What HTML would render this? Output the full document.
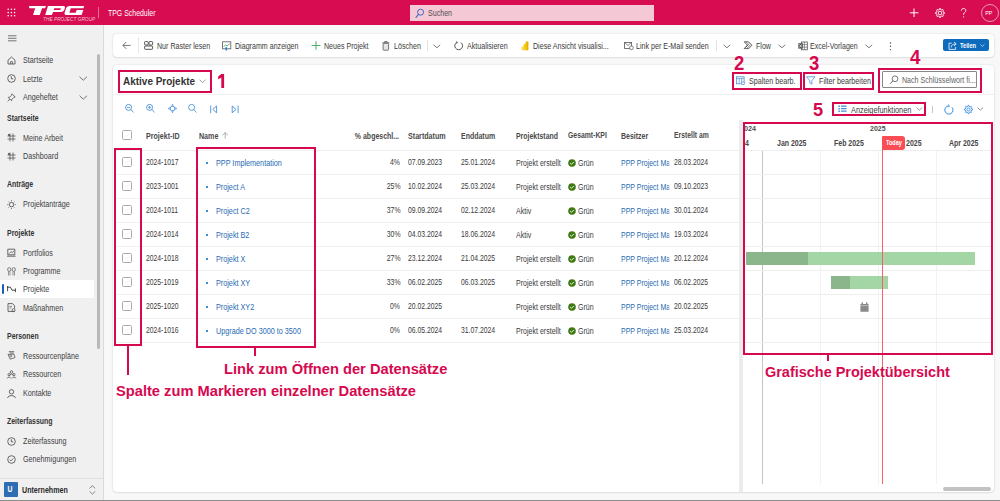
<!DOCTYPE html>
<html><head><meta charset="utf-8">
<style>
*{margin:0;padding:0;box-sizing:border-box}
html,body{width:1000px;height:501px;overflow:hidden;background:#f8f8f8;font-family:"Liberation Sans",sans-serif;color:#323130}
.a{position:absolute;white-space:nowrap}
svg.a{overflow:visible}
</style></head><body>
<div class="a" style="left:0px;top:25px;width:103px;height:475px;background:#f0f0f0;"></div>
<div class="a" style="left:103px;top:25px;width:1px;height:475px;background:#dadada;"></div>
<div class="a" style="left:0px;top:500px;width:1000px;height:1px;background:#8c8c8c;"></div>
<div class="a" style="left:113px;top:34px;width:881px;height:23px;background:#fff;border-radius:4px;box-shadow:0 0 1.5px rgba(0,0,0,.18),0 1px 2px rgba(0,0,0,.08)"></div>
<div class="a" style="left:113px;top:65px;width:881px;height:427px;background:#fff;border-radius:4px;box-shadow:0 0 1.5px rgba(0,0,0,.18),0 1px 2px rgba(0,0,0,.08)"></div>
<div class="a" style="left:0px;top:0px;width:1000px;height:25px;background:#d70c51;"></div>
<svg class="a" style="left:0px;top:0px" width="20" height="20" viewBox="0 0 20 20"><circle cx="8.2" cy="9.3" r=".8" fill="#fff"/><circle cx="8.2" cy="12.6" r=".8" fill="#fff"/><circle cx="8.2" cy="15.8" r=".8" fill="#fff"/><circle cx="11.4" cy="9.3" r=".8" fill="#fff"/><circle cx="11.4" cy="12.6" r=".8" fill="#fff"/><circle cx="11.4" cy="15.8" r=".8" fill="#fff"/><circle cx="14.6" cy="9.3" r=".8" fill="#fff"/><circle cx="14.6" cy="12.6" r=".8" fill="#fff"/><circle cx="14.6" cy="15.8" r=".8" fill="#fff"/></svg>
<svg class="a" style="left:0px;top:0px" width="100" height="25" viewBox="0 0 100 25"><g transform="matrix(1 0 -0.33 1 4.95 0)" fill="#fff"><path d="M25.9 5.9H42.9V8.3H39.8V15H33V8.3H27.3Z"/><path fill-rule="evenodd" d="M44.9 5.9H60.3Q62.6 5.9 62.6 8.1V9.8Q62.6 11.9 60.4 11.9H52V15H45.2ZM52 8.3H58.6V9.9H52Z"/><path d="M66.6 5.9H81.2V8.3H68.6V12.8H75V9.9H81.6V15H66.6Q63.8 15 63.8 12.2V8.7Q63.8 5.9 66.6 5.9Z"/></g></svg>
<div class="a" style="left:43px;top:16.5px;font-size:4.8px;line-height:6px;font-style:italic;color:#f3bfd0">THE PROJECT GROUP</div>
<div class="a" style="left:98px;top:7px;width:1px;height:10.5px;background:#e2729a;"></div>
<div class="a" style="left:107.5px;top:8.30px;font-size:8.34px;line-height:10px;color:#fff;transform:scaleX(0.8333);transform-origin:left center;">TPG Scheduler</div>
<div class="a" style="left:410px;top:5px;width:244px;height:15.5px;background:#f5c8d6;"></div>
<svg class="a" style="left:414px;top:6.6px" width="12" height="12" viewBox="0 0 12 12"><circle cx="6.6" cy="5.2" r="3" fill="none" stroke="#3d6cc0" stroke-width="1"/><path d="M4.5 7.3L2 10.3" stroke="#3d6cc0" stroke-width="1.1" stroke-linecap="round"/></svg>
<div class="a" style="left:428px;top:8.10px;font-size:8.52px;line-height:10px;color:#505050;transform:scaleX(0.8333);transform-origin:left center;">Suchen</div>
<svg class="a" style="left:909px;top:8px" width="10" height="10" viewBox="0 0 10 10"><path d="M5 .5V9M.8 4.8H9.4" stroke="#fff" stroke-width="1"/></svg>
<svg class="a" style="left:934.5px;top:7.8px" width="10" height="10" viewBox="0 0 10 10"><path d="M8.45 4.38L9.47 4.49L9.47 5.51L8.45 5.62L7.87 7.00L8.52 7.80L7.80 8.52L7.00 7.87L5.62 8.45L5.51 9.47L4.49 9.47L4.38 8.45L3.00 7.87L2.20 8.52L1.48 7.80L2.13 7.00L1.55 5.62L0.53 5.51L0.53 4.49L1.55 4.38L2.13 3.00L1.48 2.20L2.20 1.48L3.00 2.13L4.38 1.55L4.49 0.53L5.51 0.53L5.62 1.55L7.00 2.13L7.80 1.48L8.52 2.20L7.87 3.00Z" fill="none" stroke="#fff" stroke-width=".9" stroke-linejoin="round"/><circle cx="5" cy="5" r="1.8" fill="none" stroke="#fff" stroke-width=".9"/></svg>
<svg class="a" style="left:960px;top:8px" width="8" height="10" viewBox="0 0 8 10"><path d="M1.3 2.6C1.3 1.3 2.4.5 3.6.5S5.9 1.3 5.9 2.6C5.9 4.2 3.6 4.4 3.6 6.3V7" fill="none" stroke="#fff" stroke-width=".9"/><circle cx="3.6" cy="8.8" r=".6" fill="#fff"/></svg>
<div class="a" style="left:980.5px;top:4px;width:18px;height:18px;border:1px solid #e89ab3;border-radius:50%"></div>
<div class="a" style="left:984.2px;top:8.10px;font-size:6.21px;line-height:10px;color:#fff;transform:scaleX(0.8696);transform-origin:left center;width:11px;text-align:center;">PP</div>
<svg class="a" style="left:8px;top:35px" width="9" height="7" viewBox="0 0 9 7"><path d="M0 .8H8.5M0 3.3H8.5M0 5.8H8.5" stroke="#555" stroke-width=".8"/></svg>
<div class="a" style="left:0px;top:280px;width:94px;height:18px;background:#ffffff;"></div>
<div class="a" style="left:1.5px;top:284px;width:2px;height:10px;background:#1a5fb4;border-radius:1px;"></div>
<div class="a" style="left:22.6px;top:55.10px;font-size:8.64px;line-height:10px;color:#3f3f3f;transform:scaleX(0.8333);transform-origin:left center;">Startseite</div>
<svg class="a" style="left:6.5px;top:55.7px" width="9" height="9" viewBox="0 0 9 9"><path d="M1 4.2L4.5 1 8 4.2V8H1Z" fill="none" stroke="#444" stroke-width=".8" stroke-linejoin="round"/><path d="M3.6 8V5.6H5.4V8" fill="none" stroke="#444" stroke-width=".7"/></svg>
<div class="a" style="left:22.6px;top:73.60px;font-size:8.64px;line-height:10px;color:#3f3f3f;transform:scaleX(0.8333);transform-origin:left center;">Letzte</div>
<svg class="a" style="left:6.5px;top:74.2px" width="9" height="9" viewBox="0 0 9 9"><circle cx="4.5" cy="4.5" r="3.8" fill="none" stroke="#444" stroke-width=".8"/><path d="M4.3 2.3V4.8H6.2" fill="none" stroke="#444" stroke-width=".8"/></svg>
<div class="a" style="left:22.6px;top:91.90px;font-size:8.64px;line-height:10px;color:#3f3f3f;transform:scaleX(0.8333);transform-origin:left center;">Angeheftet</div>
<svg class="a" style="left:6.5px;top:92.5px" width="9" height="9" viewBox="0 0 9 9"><path d="M5 .8L8.2 4 6.6 4.6 4.9 6.3 4.6 7.8 1.2 4.4 2.7 4.1 4.4 2.4Z M2.9 6.1L.6 8.4" fill="none" stroke="#444" stroke-width=".75" stroke-linejoin="round"/></svg>
<div class="a" style="left:22.6px;top:132.70px;font-size:8.64px;line-height:10px;color:#3f3f3f;transform:scaleX(0.8333);transform-origin:left center;">Meine Arbeit</div>
<svg class="a" style="left:6.5px;top:133.3px" width="9" height="9" viewBox="0 0 9 9"><path d="M3 .5V8.5M6 .5V8.5M.5 3H8.5M.5 6H8.5" stroke="#555" stroke-width=".8"/><path d="M1 1H3V3H1Z" fill="#666"/></svg>
<div class="a" style="left:22.6px;top:151.10px;font-size:8.64px;line-height:10px;color:#3f3f3f;transform:scaleX(0.8333);transform-origin:left center;">Dashboard</div>
<svg class="a" style="left:6.5px;top:151.7px" width="9" height="9" viewBox="0 0 9 9"><path d="M3 .5V8.5M6 .5V8.5M.5 3H8.5M.5 6H8.5" stroke="#555" stroke-width=".8"/><path d="M1 1H3V3H1Z" fill="#666"/></svg>
<div class="a" style="left:22.6px;top:199.10px;font-size:8.64px;line-height:10px;color:#3f3f3f;transform:scaleX(0.8333);transform-origin:left center;">Projektanträge</div>
<svg class="a" style="left:6.5px;top:199.7px" width="9" height="9" viewBox="0 0 9 9"><circle cx="4.5" cy="4.6" r="2.2" fill="none" stroke="#444" stroke-width=".8"/><path d="M4.5 .2V1.3M4.5 7.9V9M.2 4.6H1.3M7.7 4.6H8.8M1.5 1.6L2.3 2.4M7.5 1.6L6.7 2.4M1.5 7.6L2.3 6.8M7.5 7.6L6.7 6.8" stroke="#444" stroke-width=".7"/></svg>
<div class="a" style="left:22.6px;top:247.70px;font-size:8.64px;line-height:10px;color:#3f3f3f;transform:scaleX(0.8333);transform-origin:left center;">Portfolios</div>
<svg class="a" style="left:6.5px;top:248.3px" width="9" height="9" viewBox="0 0 9 9"><path d="M.8 1.2H7.8V6.8H.8Z" fill="none" stroke="#444" stroke-width=".8"/><path d="M2.2 5.6L4 3.6 5.3 4.8 7 2.8" fill="none" stroke="#444" stroke-width=".7"/><path d="M0 8.2H8.6" stroke="#444" stroke-width=".8"/></svg>
<div class="a" style="left:22.6px;top:265.90px;font-size:8.64px;line-height:10px;color:#3f3f3f;transform:scaleX(0.8333);transform-origin:left center;">Programme</div>
<svg class="a" style="left:6.5px;top:266.5px" width="9" height="9" viewBox="0 0 9 9"><rect x=".7" y=".7" width="3.1" height="3.6" rx="1.3" fill="none" stroke="#555" stroke-width=".7"/><rect x="5.2" y=".7" width="3.1" height="3.6" rx="1.3" fill="none" stroke="#555" stroke-width=".7"/><path d="M1.5 4.5V8.5M3 4.5V8.5M6 4.5V8.5M7.5 4.5V8.5" stroke="#555" stroke-width=".6"/></svg>
<div class="a" style="left:22.6px;top:284.20px;font-size:8.64px;line-height:10px;color:#3f3f3f;transform:scaleX(0.8333);transform-origin:left center;">Projekte</div>
<svg class="a" style="left:6.5px;top:284.8px" width="9" height="9" viewBox="0 0 9 9"><path d="M.6 1V6.2M.6 2.2H3.4L5 5.2H8.4M8.4 3.4V7.2" fill="none" stroke="#333" stroke-width=".9"/></svg>
<div class="a" style="left:22.6px;top:302.70px;font-size:8.64px;line-height:10px;color:#3f3f3f;transform:scaleX(0.8333);transform-origin:left center;">Maßnahmen</div>
<svg class="a" style="left:6.5px;top:303.3px" width="9" height="9" viewBox="0 0 9 9"><path d="M1 .6H5.5L7.6 2.8V5.6M7.6 8.4H1V.6" fill="none" stroke="#444" stroke-width=".8"/><circle cx="6.6" cy="7.2" r="1.5" fill="none" stroke="#444" stroke-width=".7"/><path d="M2.4 3.4H5M2.4 5H4.4" stroke="#444" stroke-width=".6"/></svg>
<div class="a" style="left:22.6px;top:350.80px;font-size:8.64px;line-height:10px;color:#3f3f3f;transform:scaleX(0.8333);transform-origin:left center;">Ressourcenpläne</div>
<svg class="a" style="left:6.5px;top:351.4px" width="9" height="9" viewBox="0 0 9 9"><path d="M1.8 .6H7.2M2.5 2H6.8M1 3.4L3.2 8.2 8 6.6 7 3.2Z" fill="none" stroke="#444" stroke-width=".7"/><circle cx="3.8" cy="5" r="1" fill="none" stroke="#444" stroke-width=".6"/></svg>
<div class="a" style="left:22.6px;top:369.20px;font-size:8.64px;line-height:10px;color:#3f3f3f;transform:scaleX(0.8333);transform-origin:left center;">Ressourcen</div>
<svg class="a" style="left:6.5px;top:369.8px" width="9" height="9" viewBox="0 0 9 9"><circle cx="4.5" cy="2" r="1.3" fill="none" stroke="#444" stroke-width=".7"/><circle cx="2" cy="4.6" r="1.1" fill="none" stroke="#444" stroke-width=".7"/><circle cx="7" cy="4.6" r="1.1" fill="none" stroke="#444" stroke-width=".7"/><path d="M.2 8.4C.4 6.6 3.6 6.6 3.8 8.4M5.2 8.4C5.4 6.6 8.6 6.6 8.8 8.4M2.8 5.6C3.2 3.6 5.8 3.6 6.2 5.6" fill="none" stroke="#444" stroke-width=".7"/></svg>
<div class="a" style="left:22.6px;top:387.90px;font-size:8.64px;line-height:10px;color:#3f3f3f;transform:scaleX(0.8333);transform-origin:left center;">Kontakte</div>
<svg class="a" style="left:6.5px;top:388.5px" width="9" height="9" viewBox="0 0 9 9"><circle cx="4.5" cy="2.8" r="2.2" fill="none" stroke="#444" stroke-width=".8"/><path d="M.6 9C.8 5.8 8.2 5.8 8.4 9" fill="none" stroke="#444" stroke-width=".8"/></svg>
<div class="a" style="left:22.6px;top:435.90px;font-size:8.64px;line-height:10px;color:#3f3f3f;transform:scaleX(0.8333);transform-origin:left center;">Zeiterfassung</div>
<svg class="a" style="left:6.5px;top:436.5px" width="9" height="9" viewBox="0 0 9 9"><circle cx="4.5" cy="4.5" r="3.8" fill="none" stroke="#444" stroke-width=".8"/><path d="M4.3 2.3V4.8H6.2" fill="none" stroke="#444" stroke-width=".8"/></svg>
<div class="a" style="left:22.6px;top:453.90px;font-size:8.64px;line-height:10px;color:#3f3f3f;transform:scaleX(0.8333);transform-origin:left center;">Genehmigungen</div>
<svg class="a" style="left:6.5px;top:454.5px" width="9" height="9" viewBox="0 0 9 9"><circle cx="4.5" cy="4.5" r="3.8" fill="none" stroke="#444" stroke-width=".8"/><path d="M2.7 4.6L4 5.9 6.4 3.4" fill="none" stroke="#444" stroke-width=".8"/></svg>
<div class="a" style="left:6.6px;top:112.80px;font-size:8.34px;line-height:10px;color:#333333;font-weight:bold;transform:scaleX(0.8333);transform-origin:left center;">Startseite</div>
<div class="a" style="left:6.6px;top:179.30px;font-size:8.34px;line-height:10px;color:#333333;font-weight:bold;transform:scaleX(0.8333);transform-origin:left center;">Anträge</div>
<div class="a" style="left:6.6px;top:227.50px;font-size:8.34px;line-height:10px;color:#333333;font-weight:bold;transform:scaleX(0.8333);transform-origin:left center;">Projekte</div>
<div class="a" style="left:6.6px;top:331.10px;font-size:8.34px;line-height:10px;color:#333333;font-weight:bold;transform:scaleX(0.8333);transform-origin:left center;">Personen</div>
<div class="a" style="left:6.6px;top:416.10px;font-size:8.34px;line-height:10px;color:#333333;font-weight:bold;transform:scaleX(0.8333);transform-origin:left center;">Zeiterfassung</div>
<svg class="a" style="left:79px;top:76.2px" width="9" height="5" viewBox="0 0 9 5"><path d="M.5 .7L4.3 4.2 8 .7" fill="none" stroke="#555" stroke-width=".8"/></svg>
<svg class="a" style="left:79px;top:94.5px" width="9" height="5" viewBox="0 0 9 5"><path d="M.5 .7L4.3 4.2 8 .7" fill="none" stroke="#555" stroke-width=".8"/></svg>
<div class="a" style="left:97px;top:53.5px;width:3px;height:295px;background:#b8b8b8;border-radius:1.5px;"></div>
<div class="a" style="left:0px;top:478px;width:103px;height:1px;background:#e0e0e0;"></div>
<div class="a" style="left:3.5px;top:482.3px;width:14.5px;height:14.4px;background:#2f6db3;border-radius:1px;"></div>
<div class="a" style="left:3.5px;top:484.80px;font-size:8.16px;line-height:10px;color:#fff;font-weight:bold;transform:scaleX(0.8333);transform-origin:left center;width:14.5px;text-align:center;">U</div>
<div class="a" style="left:21.7px;top:484.90px;font-size:8.54px;line-height:10px;color:#2b2b2b;font-weight:bold;transform:scaleX(0.8333);transform-origin:left center;">Unternehmen</div>
<svg class="a" style="left:88.5px;top:485px" width="7" height="10" viewBox="0 0 7 10"><path d="M.6 3.4L3.4 .7 6.2 3.4M.6 6.4L3.4 9.1 6.2 6.4" fill="none" stroke="#666" stroke-width=".8"/></svg>
<svg class="a" style="left:122px;top:41px" width="10" height="9" viewBox="0 0 10 9"><path d="M4.2 1L.9 4.4 4.2 7.8M1 4.4H8.6" fill="none" stroke="#555" stroke-width=".8"/></svg>
<div class="a" style="left:137.5px;top:37px;width:1px;height:16px;background:#e6e6e6;"></div>
<svg class="a" style="left:144px;top:40.5px" width="10" height="9" viewBox="0 0 10 9"><rect x=".6" y=".6" width="3.6" height="3.4" rx=".7" fill="none" stroke="#444" stroke-width=".9"/><rect x="5" y=".6" width="3.6" height="3.4" rx=".7" fill="none" stroke="#444" stroke-width=".9"/><rect x=".6" y="5" width="8" height="3.3" rx=".7" fill="none" stroke="#444" stroke-width=".9"/></svg>
<div class="a" style="left:157px;top:41.10px;font-size:8.52px;line-height:10px;color:#3a3a3a;transform:scaleX(0.8333);transform-origin:left center;">Nur Raster lesen</div>
<svg class="a" style="left:221.5px;top:40.5px" width="10" height="10" viewBox="0 0 10 10"><rect x=".6" y=".8" width="8.2" height="7" fill="none" stroke="#555" stroke-width=".8"/><path d="M1.8 5.8L3.6 3.8 5.2 5 7.6 2.6" fill="none" stroke="#3aa55a" stroke-width=".8"/><path d="M4.3 6.2V9.5" stroke="#2b7cd3" stroke-width="1.6"/></svg>
<div class="a" style="left:234.7px;top:41.10px;font-size:8.52px;line-height:10px;color:#3a3a3a;transform:scaleX(0.8333);transform-origin:left center;">Diagramm anzeigen</div>
<svg class="a" style="left:311px;top:41px" width="10" height="9" viewBox="0 0 10 9"><path d="M5 .2V8.8M.6 4.5H9.4" stroke="#3aa55a" stroke-width=".9"/></svg>
<div class="a" style="left:324.4px;top:41.10px;font-size:8.52px;line-height:10px;color:#3a3a3a;transform:scaleX(0.8333);transform-origin:left center;">Neues Projekt</div>
<svg class="a" style="left:381.5px;top:40.5px" width="8" height="10" viewBox="0 0 8 10"><path d="M.3 1.8H7.4M2.6 1.8V.6H5.1V1.8" fill="none" stroke="#555" stroke-width=".8"/><rect x="1.1" y="2.3" width="5.5" height="6.9" rx=".8" fill="#e6e6e6" stroke="#555" stroke-width=".8"/></svg>
<div class="a" style="left:393.7px;top:41.10px;font-size:8.52px;line-height:10px;color:#3a3a3a;transform:scaleX(0.8333);transform-origin:left center;">Löschen</div>
<div class="a" style="left:426.5px;top:40px;width:1px;height:11px;background:#e3e3e3;"></div>
<svg class="a" style="left:432.5px;top:43.5px" width="8" height="5" viewBox="0 0 8 5"><path d="M.6 .8L3.9 3.8 7.2 .8" fill="none" stroke="#555" stroke-width=".8"/></svg>
<svg class="a" style="left:453.5px;top:40.5px" width="10" height="10" viewBox="0 0 10 10"><path d="M6.9 1.6A3.9 3.9 0 1 1 3 1.3" fill="none" stroke="#444" stroke-width=".9"/><path d="M2.5 0.3L3.6 1.4 2.5 2.6" fill="none" stroke="#444" stroke-width=".8"/></svg>
<div class="a" style="left:466.9px;top:41.10px;font-size:8.52px;line-height:10px;color:#3a3a3a;transform:scaleX(0.8333);transform-origin:left center;">Aktualisieren</div>
<svg class="a" style="left:521px;top:40.5px" width="8" height="10" viewBox="0 0 8 10"><rect x="4.6" y=".6" width="2.8" height="8.6" rx=".6" fill="#e8b200"/><rect x="2.6" y="3" width="2.8" height="6.2" rx=".6" fill="#f2c811"/><rect x=".6" y="5.6" width="2.8" height="3.6" rx=".6" fill="#f9d94a"/></svg>
<div class="a" style="left:533px;top:41.10px;font-size:8.52px;line-height:10px;color:#3a3a3a;transform:scaleX(0.8333);transform-origin:left center;">Diese Ansicht visualisi...</div>
<svg class="a" style="left:623.5px;top:40.5px" width="10" height="10" viewBox="0 0 10 10"><rect x=".6" y="1.5" width="6.8" height="6" fill="none" stroke="#555" stroke-width=".8"/><path d="M.6 1.5L4 4.6 7.4 1.5" fill="none" stroke="#555" stroke-width=".7"/><circle cx="7.4" cy="6.8" r="1.9" fill="#fff" stroke="#555" stroke-width=".7"/></svg>
<div class="a" style="left:636px;top:41.10px;font-size:8.52px;line-height:10px;color:#3a3a3a;transform:scaleX(0.8333);transform-origin:left center;">Link per E-Mail senden</div>
<div class="a" style="left:716px;top:40px;width:1px;height:11px;background:#e3e3e3;"></div>
<svg class="a" style="left:722.5px;top:43.5px" width="8" height="5" viewBox="0 0 8 5"><path d="M.6 .8L3.9 3.8 7.2 .8" fill="none" stroke="#555" stroke-width=".8"/></svg>
<svg class="a" style="left:743px;top:41px" width="10" height="9" viewBox="0 0 10 9"><path d="M1.2 .8H5.6L8.9 4.2 5.8 7.6H1.2L4.4 4.2Z" fill="none" stroke="#3c3c3c" stroke-width=".8" stroke-linejoin="round"/><path d="M2.6 6.4L6.2 2.6M4.2 7.2L7.4 3.8M3.4 1.2L5 2.8" fill="none" stroke="#3c3c3c" stroke-width=".7"/></svg>
<div class="a" style="left:756px;top:41.10px;font-size:8.52px;line-height:10px;color:#3a3a3a;transform:scaleX(0.8333);transform-origin:left center;">Flow</div>
<svg class="a" style="left:777.5px;top:43.5px" width="8" height="5" viewBox="0 0 8 5"><path d="M.6 .8L3.9 3.8 7.2 .8" fill="none" stroke="#555" stroke-width=".8"/></svg>
<svg class="a" style="left:797.5px;top:40.5px" width="10" height="10" viewBox="0 0 10 10"><rect x="3.5" y="1" width="5.8" height="7.8" fill="none" stroke="#555" stroke-width=".8"/><path d="M3.5 3.6H9.3M3.5 6.2H9.3M6.4 1V8.8" stroke="#555" stroke-width=".6"/><rect x=".3" y="2.2" width="4.6" height="5.4" fill="#555"/><path d="M1.4 3.4L3.8 6.4M3.8 3.4L1.4 6.4" stroke="#fff" stroke-width=".7"/></svg>
<div class="a" style="left:810.3px;top:41.10px;font-size:8.52px;line-height:10px;color:#3a3a3a;transform:scaleX(0.8333);transform-origin:left center;">Excel-Vorlagen</div>
<svg class="a" style="left:865px;top:43.5px" width="8" height="5" viewBox="0 0 8 5"><path d="M.6 .8L3.9 3.8 7.2 .8" fill="none" stroke="#555" stroke-width=".8"/></svg>
<svg class="a" style="left:889px;top:41.5px" width="3" height="9" viewBox="0 0 3 9"><circle cx="1.5" cy="1" r=".7" fill="#444"/><circle cx="1.5" cy="4.3" r=".7" fill="#444"/><circle cx="1.5" cy="7.6" r=".7" fill="#444"/></svg>
<div class="a" style="left:942.6px;top:39px;width:46px;height:12.4px;background:#0f6cbd;border-radius:2px;"></div>
<svg class="a" style="left:948px;top:41px" width="10" height="9" viewBox="0 0 10 9"><path d="M3.8 2.2H1V8.4H7.6V6" fill="none" stroke="#fff" stroke-width=".8"/><path d="M3.2 6.4C3.4 4 5 3 7.6 3M6 1L8.2 3 6 5" fill="none" stroke="#fff" stroke-width=".8"/></svg>
<div class="a" style="left:960px;top:40.70px;font-size:7.52px;line-height:10px;color:#fff;font-weight:bold;transform:scaleX(0.7576);transform-origin:left center;">Teilen</div>
<svg class="a" style="left:979.8px;top:44.4px" width="5" height="3" viewBox="0 0 5 3"><path d="M.4 .5L2.4 2.4 4.4 .5" fill="none" stroke="#fff" stroke-width=".6"/></svg>
<div class="a" style="left:123px;top:73.60px;font-size:11.47px;line-height:14px;color:#333333;font-weight:bold;transform:scaleX(0.8696);transform-origin:left center;">Aktive Projekte</div>
<svg class="a" style="left:199px;top:79px" width="8" height="5" viewBox="0 0 8 5"><path d="M.6 .8L3.6 3.6 6.6 .8" fill="none" stroke="#777" stroke-width=".7"/></svg>
<div class="a" style="left:113px;top:94px;width:881px;height:1px;background:#efefef;"></div>
<svg class="a" style="left:125.2px;top:104.2px" width="9" height="9" viewBox="0 0 9 9"><circle cx="3.6" cy="3.4" r="3" fill="none" stroke="#4b8fd6" stroke-width=".9"/><path d="M5.7 5.5L8.6 8.4" stroke="#4b8fd6" stroke-width=".9"/><path d="M2 3.4H5.2" stroke="#4b8fd6" stroke-width=".8"/></svg>
<svg class="a" style="left:146px;top:104.2px" width="9" height="9" viewBox="0 0 9 9"><circle cx="3.6" cy="3.4" r="3" fill="none" stroke="#4b8fd6" stroke-width=".9"/><path d="M5.7 5.5L8.6 8.4" stroke="#4b8fd6" stroke-width=".9"/><path d="M2 3.4H5.2M3.6 1.8V5" stroke="#4b8fd6" stroke-width=".8"/></svg>
<svg class="a" style="left:167.5px;top:104.3px" width="9" height="9" viewBox="0 0 9 9"><rect x="2.3" y="2.3" width="4.4" height="4.4" rx="1.6" fill="none" stroke="#4b8fd6" stroke-width=".9"/><path d="M4.5 0L3.1 1.6H5.9Z M4.5 9L3.1 7.4H5.9Z M0 4.5L1.6 3.1V5.9Z M9 4.5L7.4 3.1V5.9Z" fill="#4b8fd6"/></svg>
<svg class="a" style="left:188px;top:104.2px" width="9" height="9" viewBox="0 0 9 9"><circle cx="3.6" cy="3.4" r="3" fill="none" stroke="#4b8fd6" stroke-width=".9"/><path d="M5.7 5.5L8.6 8.4" stroke="#4b8fd6" stroke-width=".9"/></svg>
<svg class="a" style="left:210px;top:104.5px" width="8" height="9" viewBox="0 0 8 9"><path d="M.7 .6V8.2" stroke="#4b8fd6" stroke-width=".9"/><path d="M6.6 1L2.8 4.4 6.6 7.8Z" fill="none" stroke="#4b8fd6" stroke-width=".9" stroke-linejoin="round"/></svg>
<svg class="a" style="left:231px;top:104.5px" width="8" height="9" viewBox="0 0 8 9"><path d="M7.1 .6V8.2" stroke="#4b8fd6" stroke-width=".9"/><path d="M1.2 1L5 4.4 1.2 7.8Z" fill="none" stroke="#4b8fd6" stroke-width=".9" stroke-linejoin="round"/></svg>
<div class="a" style="left:122.3px;top:130.3px;width:10px;height:10px;border:1px solid #ababab;border-radius:1.5px;background:#fff"></div>
<svg class="a" style="left:122.3px;top:130.3px" width="10" height="10" viewBox="0 0 10 10"><path d="M3 5.2L4.4 6.5 7.2 3.6" fill="none" stroke="#e6e6e6" stroke-width=".7"/></svg>
<div class="a" style="left:146px;top:131.40px;font-size:8.52px;line-height:10px;color:#4a4a4a;font-weight:bold;transform:scaleX(0.8333);transform-origin:left center;">Projekt-ID</div>
<div class="a" style="left:199px;top:131.40px;font-size:8.52px;line-height:10px;color:#4a4a4a;font-weight:bold;transform:scaleX(0.8333);transform-origin:left center;">Name</div>
<svg class="a" style="left:221.8px;top:131.5px" width="7" height="7" viewBox="0 0 7 7"><path d="M3.2 6.6V.6M.5 3.2L3.2.6 5.9 3.2" fill="none" stroke="#9a9a9a" stroke-width=".8"/></svg>
<div class="a" style="right:600.5px;top:131.40px;font-size:8.40px;line-height:10px;color:#4a4a4a;font-weight:bold;transform:scaleX(0.8333);transform-origin:right center;">% abgeschl...</div>
<div class="a" style="left:408.3px;top:131.40px;font-size:8.57px;line-height:10px;color:#4a4a4a;font-weight:bold;transform:scaleX(0.8333);transform-origin:left center;">Startdatum</div>
<div class="a" style="left:460.9px;top:131.40px;font-size:8.40px;line-height:10px;color:#4a4a4a;font-weight:bold;transform:scaleX(0.8333);transform-origin:left center;">Enddatum</div>
<div class="a" style="left:515.9px;top:131.40px;font-size:8.32px;line-height:10px;color:#4a4a4a;font-weight:bold;transform:scaleX(0.8333);transform-origin:left center;">Projektstand</div>
<div class="a" style="left:568.3px;top:131.40px;font-size:8.23px;line-height:10px;color:#4a4a4a;font-weight:bold;transform:scaleX(0.8333);transform-origin:left center;">Gesamt-KPI</div>
<div class="a" style="left:621.1px;top:131.40px;font-size:8.40px;line-height:10px;color:#4a4a4a;font-weight:bold;transform:scaleX(0.8333);transform-origin:left center;">Besitzer</div>
<div class="a" style="left:673.7px;top:131.40px;font-size:8.16px;line-height:10px;color:#4a4a4a;font-weight:bold;transform:scaleX(0.8333);transform-origin:left center;">Erstellt am</div>
<div class="a" style="left:116px;top:150px;width:624px;height:1px;background:#f0f0f0;"></div>
<div class="a" style="left:116px;top:174px;width:624px;height:1px;background:#f0f0f0;"></div>
<div class="a" style="left:116px;top:198px;width:624px;height:1px;background:#f0f0f0;"></div>
<div class="a" style="left:116px;top:222px;width:624px;height:1px;background:#f0f0f0;"></div>
<div class="a" style="left:116px;top:246px;width:624px;height:1px;background:#f0f0f0;"></div>
<div class="a" style="left:116px;top:270px;width:624px;height:1px;background:#f0f0f0;"></div>
<div class="a" style="left:116px;top:294px;width:624px;height:1px;background:#f0f0f0;"></div>
<div class="a" style="left:116px;top:318px;width:624px;height:1px;background:#f0f0f0;"></div>
<div class="a" style="left:116px;top:342px;width:624px;height:1px;background:#f0f0f0;"></div>
<div class="a" style="left:122.3px;top:157px;width:10px;height:10px;border:1px solid #ababab;border-radius:1.5px;background:#fff"></div>
<svg class="a" style="left:122.3px;top:157px" width="10" height="10" viewBox="0 0 10 10"><path d="M3 5.2L4.4 6.5 7.2 3.6" fill="none" stroke="#e6e6e6" stroke-width=".7"/></svg>
<div class="a" style="left:146px;top:157.50px;font-size:8.16px;line-height:10px;color:#3a3a3a;transform:scaleX(0.8333);transform-origin:left center;">2024-1017</div>
<div class="a" style="left:206.2px;top:161.79999999999998px;width:1.8px;height:1.8px;background:#3b8ad9;"></div>
<div class="a" style="left:216px;top:157.50px;font-size:8.70px;line-height:10px;color:#2a6bb3;transform:scaleX(0.8333);transform-origin:left center;">PPP Implementation</div>
<div class="a" style="right:599.8px;top:157.50px;font-size:8.28px;line-height:10px;color:#3a3a3a;transform:scaleX(0.8333);transform-origin:right center;">4%</div>
<div class="a" style="left:408.3px;top:157.50px;font-size:8.16px;line-height:10px;color:#3a3a3a;transform:scaleX(0.8333);transform-origin:left center;">07.09.2023</div>
<div class="a" style="left:460.9px;top:157.50px;font-size:8.16px;line-height:10px;color:#3a3a3a;transform:scaleX(0.8333);transform-origin:left center;">25.01.2024</div>
<div class="a" style="left:515.9px;top:157.50px;font-size:8.48px;line-height:10px;color:#3a3a3a;transform:scaleX(0.8333);transform-origin:left center;">Projekt erstellt</div>
<svg class="a" style="left:568px;top:158.79999999999998px" width="8" height="8" viewBox="0 0 8 8"><circle cx="4" cy="4" r="3.8" fill="#3f7a12"/><path d="M2.2 4.1L3.5 5.3 5.9 2.9" fill="none" stroke="#fff" stroke-width=".9"/></svg>
<div class="a" style="left:578px;top:157.50px;font-size:8.47px;line-height:10px;color:#3a3a3a;transform:scaleX(0.8333);transform-origin:left center;">Grün</div>
<div class="a" style="left:621px;top:157.50px;width:57.96px;overflow:hidden;font-size:8.40px;line-height:10px;color:#2a6bb3;transform:scaleX(0.8333);transform-origin:left center">PPP Project Manager</div>
<div class="a" style="left:673.7px;top:157.50px;font-size:8.16px;line-height:10px;color:#3a3a3a;transform:scaleX(0.8333);transform-origin:left center;">28.03.2024</div>
<div class="a" style="left:122.3px;top:181px;width:10px;height:10px;border:1px solid #ababab;border-radius:1.5px;background:#fff"></div>
<svg class="a" style="left:122.3px;top:181px" width="10" height="10" viewBox="0 0 10 10"><path d="M3 5.2L4.4 6.5 7.2 3.6" fill="none" stroke="#e6e6e6" stroke-width=".7"/></svg>
<div class="a" style="left:146px;top:181.50px;font-size:8.16px;line-height:10px;color:#3a3a3a;transform:scaleX(0.8333);transform-origin:left center;">2023-1001</div>
<div class="a" style="left:206.2px;top:185.79999999999998px;width:1.8px;height:1.8px;background:#3b8ad9;"></div>
<div class="a" style="left:216px;top:181.50px;font-size:8.70px;line-height:10px;color:#2a6bb3;transform:scaleX(0.8333);transform-origin:left center;">Project A</div>
<div class="a" style="right:599.8px;top:181.50px;font-size:8.28px;line-height:10px;color:#3a3a3a;transform:scaleX(0.8333);transform-origin:right center;">25%</div>
<div class="a" style="left:408.3px;top:181.50px;font-size:8.16px;line-height:10px;color:#3a3a3a;transform:scaleX(0.8333);transform-origin:left center;">10.02.2024</div>
<div class="a" style="left:460.9px;top:181.50px;font-size:8.16px;line-height:10px;color:#3a3a3a;transform:scaleX(0.8333);transform-origin:left center;">25.03.2024</div>
<div class="a" style="left:515.9px;top:181.50px;font-size:8.48px;line-height:10px;color:#3a3a3a;transform:scaleX(0.8333);transform-origin:left center;">Projekt erstellt</div>
<svg class="a" style="left:568px;top:182.79999999999998px" width="8" height="8" viewBox="0 0 8 8"><circle cx="4" cy="4" r="3.8" fill="#3f7a12"/><path d="M2.2 4.1L3.5 5.3 5.9 2.9" fill="none" stroke="#fff" stroke-width=".9"/></svg>
<div class="a" style="left:578px;top:181.50px;font-size:8.47px;line-height:10px;color:#3a3a3a;transform:scaleX(0.8333);transform-origin:left center;">Grün</div>
<div class="a" style="left:621px;top:181.50px;width:57.96px;overflow:hidden;font-size:8.40px;line-height:10px;color:#2a6bb3;transform:scaleX(0.8333);transform-origin:left center">PPP Project Manager</div>
<div class="a" style="left:673.7px;top:181.50px;font-size:8.16px;line-height:10px;color:#3a3a3a;transform:scaleX(0.8333);transform-origin:left center;">09.10.2023</div>
<div class="a" style="left:122.3px;top:205px;width:10px;height:10px;border:1px solid #ababab;border-radius:1.5px;background:#fff"></div>
<svg class="a" style="left:122.3px;top:205px" width="10" height="10" viewBox="0 0 10 10"><path d="M3 5.2L4.4 6.5 7.2 3.6" fill="none" stroke="#e6e6e6" stroke-width=".7"/></svg>
<div class="a" style="left:146px;top:205.50px;font-size:8.16px;line-height:10px;color:#3a3a3a;transform:scaleX(0.8333);transform-origin:left center;">2024-1011</div>
<div class="a" style="left:206.2px;top:209.79999999999998px;width:1.8px;height:1.8px;background:#3b8ad9;"></div>
<div class="a" style="left:216px;top:205.50px;font-size:8.70px;line-height:10px;color:#2a6bb3;transform:scaleX(0.8333);transform-origin:left center;">Project C2</div>
<div class="a" style="right:599.8px;top:205.50px;font-size:8.28px;line-height:10px;color:#3a3a3a;transform:scaleX(0.8333);transform-origin:right center;">37%</div>
<div class="a" style="left:408.3px;top:205.50px;font-size:8.16px;line-height:10px;color:#3a3a3a;transform:scaleX(0.8333);transform-origin:left center;">09.09.2024</div>
<div class="a" style="left:460.9px;top:205.50px;font-size:8.16px;line-height:10px;color:#3a3a3a;transform:scaleX(0.8333);transform-origin:left center;">02.12.2024</div>
<div class="a" style="left:515.9px;top:205.50px;font-size:8.48px;line-height:10px;color:#3a3a3a;transform:scaleX(0.8333);transform-origin:left center;">Aktiv</div>
<svg class="a" style="left:568px;top:206.79999999999998px" width="8" height="8" viewBox="0 0 8 8"><circle cx="4" cy="4" r="3.8" fill="#3f7a12"/><path d="M2.2 4.1L3.5 5.3 5.9 2.9" fill="none" stroke="#fff" stroke-width=".9"/></svg>
<div class="a" style="left:578px;top:205.50px;font-size:8.47px;line-height:10px;color:#3a3a3a;transform:scaleX(0.8333);transform-origin:left center;">Grün</div>
<div class="a" style="left:621px;top:205.50px;width:57.96px;overflow:hidden;font-size:8.40px;line-height:10px;color:#2a6bb3;transform:scaleX(0.8333);transform-origin:left center">PPP Project Manager</div>
<div class="a" style="left:673.7px;top:205.50px;font-size:8.16px;line-height:10px;color:#3a3a3a;transform:scaleX(0.8333);transform-origin:left center;">30.01.2024</div>
<div class="a" style="left:122.3px;top:229px;width:10px;height:10px;border:1px solid #ababab;border-radius:1.5px;background:#fff"></div>
<svg class="a" style="left:122.3px;top:229px" width="10" height="10" viewBox="0 0 10 10"><path d="M3 5.2L4.4 6.5 7.2 3.6" fill="none" stroke="#e6e6e6" stroke-width=".7"/></svg>
<div class="a" style="left:146px;top:229.50px;font-size:8.16px;line-height:10px;color:#3a3a3a;transform:scaleX(0.8333);transform-origin:left center;">2024-1014</div>
<div class="a" style="left:206.2px;top:233.79999999999998px;width:1.8px;height:1.8px;background:#3b8ad9;"></div>
<div class="a" style="left:216px;top:229.50px;font-size:8.70px;line-height:10px;color:#2a6bb3;transform:scaleX(0.8333);transform-origin:left center;">Projekt B2</div>
<div class="a" style="right:599.8px;top:229.50px;font-size:8.28px;line-height:10px;color:#3a3a3a;transform:scaleX(0.8333);transform-origin:right center;">30%</div>
<div class="a" style="left:408.3px;top:229.50px;font-size:8.16px;line-height:10px;color:#3a3a3a;transform:scaleX(0.8333);transform-origin:left center;">04.03.2024</div>
<div class="a" style="left:460.9px;top:229.50px;font-size:8.16px;line-height:10px;color:#3a3a3a;transform:scaleX(0.8333);transform-origin:left center;">18.06.2024</div>
<div class="a" style="left:515.9px;top:229.50px;font-size:8.48px;line-height:10px;color:#3a3a3a;transform:scaleX(0.8333);transform-origin:left center;">Aktiv</div>
<svg class="a" style="left:568px;top:230.79999999999998px" width="8" height="8" viewBox="0 0 8 8"><circle cx="4" cy="4" r="3.8" fill="#3f7a12"/><path d="M2.2 4.1L3.5 5.3 5.9 2.9" fill="none" stroke="#fff" stroke-width=".9"/></svg>
<div class="a" style="left:578px;top:229.50px;font-size:8.47px;line-height:10px;color:#3a3a3a;transform:scaleX(0.8333);transform-origin:left center;">Grün</div>
<div class="a" style="left:621px;top:229.50px;width:57.96px;overflow:hidden;font-size:8.40px;line-height:10px;color:#2a6bb3;transform:scaleX(0.8333);transform-origin:left center">PPP Project Manager</div>
<div class="a" style="left:673.7px;top:229.50px;font-size:8.16px;line-height:10px;color:#3a3a3a;transform:scaleX(0.8333);transform-origin:left center;">19.03.2024</div>
<div class="a" style="left:122.3px;top:253px;width:10px;height:10px;border:1px solid #ababab;border-radius:1.5px;background:#fff"></div>
<svg class="a" style="left:122.3px;top:253px" width="10" height="10" viewBox="0 0 10 10"><path d="M3 5.2L4.4 6.5 7.2 3.6" fill="none" stroke="#e6e6e6" stroke-width=".7"/></svg>
<div class="a" style="left:146px;top:253.50px;font-size:8.16px;line-height:10px;color:#3a3a3a;transform:scaleX(0.8333);transform-origin:left center;">2024-1018</div>
<div class="a" style="left:206.2px;top:257.8px;width:1.8px;height:1.8px;background:#3b8ad9;"></div>
<div class="a" style="left:216px;top:253.50px;font-size:8.70px;line-height:10px;color:#2a6bb3;transform:scaleX(0.8333);transform-origin:left center;">Projekt X</div>
<div class="a" style="right:599.8px;top:253.50px;font-size:8.28px;line-height:10px;color:#3a3a3a;transform:scaleX(0.8333);transform-origin:right center;">27%</div>
<div class="a" style="left:408.3px;top:253.50px;font-size:8.16px;line-height:10px;color:#3a3a3a;transform:scaleX(0.8333);transform-origin:left center;">23.12.2024</div>
<div class="a" style="left:460.9px;top:253.50px;font-size:8.16px;line-height:10px;color:#3a3a3a;transform:scaleX(0.8333);transform-origin:left center;">21.04.2025</div>
<div class="a" style="left:515.9px;top:253.50px;font-size:8.48px;line-height:10px;color:#3a3a3a;transform:scaleX(0.8333);transform-origin:left center;">Projekt erstellt</div>
<svg class="a" style="left:568px;top:254.79999999999998px" width="8" height="8" viewBox="0 0 8 8"><circle cx="4" cy="4" r="3.8" fill="#3f7a12"/><path d="M2.2 4.1L3.5 5.3 5.9 2.9" fill="none" stroke="#fff" stroke-width=".9"/></svg>
<div class="a" style="left:578px;top:253.50px;font-size:8.47px;line-height:10px;color:#3a3a3a;transform:scaleX(0.8333);transform-origin:left center;">Grün</div>
<div class="a" style="left:621px;top:253.50px;width:57.96px;overflow:hidden;font-size:8.40px;line-height:10px;color:#2a6bb3;transform:scaleX(0.8333);transform-origin:left center">PPP Project Manager</div>
<div class="a" style="left:673.7px;top:253.50px;font-size:8.16px;line-height:10px;color:#3a3a3a;transform:scaleX(0.8333);transform-origin:left center;">20.12.2024</div>
<div class="a" style="left:122.3px;top:277px;width:10px;height:10px;border:1px solid #ababab;border-radius:1.5px;background:#fff"></div>
<svg class="a" style="left:122.3px;top:277px" width="10" height="10" viewBox="0 0 10 10"><path d="M3 5.2L4.4 6.5 7.2 3.6" fill="none" stroke="#e6e6e6" stroke-width=".7"/></svg>
<div class="a" style="left:146px;top:277.50px;font-size:8.16px;line-height:10px;color:#3a3a3a;transform:scaleX(0.8333);transform-origin:left center;">2025-1019</div>
<div class="a" style="left:206.2px;top:281.8px;width:1.8px;height:1.8px;background:#3b8ad9;"></div>
<div class="a" style="left:216px;top:277.50px;font-size:8.70px;line-height:10px;color:#2a6bb3;transform:scaleX(0.8333);transform-origin:left center;">Projekt XY</div>
<div class="a" style="right:599.8px;top:277.50px;font-size:8.28px;line-height:10px;color:#3a3a3a;transform:scaleX(0.8333);transform-origin:right center;">33%</div>
<div class="a" style="left:408.3px;top:277.50px;font-size:8.16px;line-height:10px;color:#3a3a3a;transform:scaleX(0.8333);transform-origin:left center;">06.02.2025</div>
<div class="a" style="left:460.9px;top:277.50px;font-size:8.16px;line-height:10px;color:#3a3a3a;transform:scaleX(0.8333);transform-origin:left center;">06.03.2025</div>
<div class="a" style="left:515.9px;top:277.50px;font-size:8.48px;line-height:10px;color:#3a3a3a;transform:scaleX(0.8333);transform-origin:left center;">Projekt erstellt</div>
<svg class="a" style="left:568px;top:278.8px" width="8" height="8" viewBox="0 0 8 8"><circle cx="4" cy="4" r="3.8" fill="#3f7a12"/><path d="M2.2 4.1L3.5 5.3 5.9 2.9" fill="none" stroke="#fff" stroke-width=".9"/></svg>
<div class="a" style="left:578px;top:277.50px;font-size:8.47px;line-height:10px;color:#3a3a3a;transform:scaleX(0.8333);transform-origin:left center;">Grün</div>
<div class="a" style="left:621px;top:277.50px;width:57.96px;overflow:hidden;font-size:8.40px;line-height:10px;color:#2a6bb3;transform:scaleX(0.8333);transform-origin:left center">PPP Project Manager</div>
<div class="a" style="left:673.7px;top:277.50px;font-size:8.16px;line-height:10px;color:#3a3a3a;transform:scaleX(0.8333);transform-origin:left center;">06.02.2025</div>
<div class="a" style="left:122.3px;top:301px;width:10px;height:10px;border:1px solid #ababab;border-radius:1.5px;background:#fff"></div>
<svg class="a" style="left:122.3px;top:301px" width="10" height="10" viewBox="0 0 10 10"><path d="M3 5.2L4.4 6.5 7.2 3.6" fill="none" stroke="#e6e6e6" stroke-width=".7"/></svg>
<div class="a" style="left:146px;top:301.50px;font-size:8.16px;line-height:10px;color:#3a3a3a;transform:scaleX(0.8333);transform-origin:left center;">2025-1020</div>
<div class="a" style="left:206.2px;top:305.8px;width:1.8px;height:1.8px;background:#3b8ad9;"></div>
<div class="a" style="left:216px;top:301.50px;font-size:8.70px;line-height:10px;color:#2a6bb3;transform:scaleX(0.8333);transform-origin:left center;">Projekt XY2</div>
<div class="a" style="right:599.8px;top:301.50px;font-size:8.28px;line-height:10px;color:#3a3a3a;transform:scaleX(0.8333);transform-origin:right center;">0%</div>
<div class="a" style="left:408.3px;top:301.50px;font-size:8.16px;line-height:10px;color:#3a3a3a;transform:scaleX(0.8333);transform-origin:left center;">20.02.2025</div>
<div class="a" style="left:460.9px;top:301.50px;font-size:8.16px;line-height:10px;color:#3a3a3a;transform:scaleX(0.8333);transform-origin:left center;"></div>
<div class="a" style="left:515.9px;top:301.50px;font-size:8.48px;line-height:10px;color:#3a3a3a;transform:scaleX(0.8333);transform-origin:left center;">Projekt erstellt</div>
<svg class="a" style="left:568px;top:302.8px" width="8" height="8" viewBox="0 0 8 8"><circle cx="4" cy="4" r="3.8" fill="#3f7a12"/><path d="M2.2 4.1L3.5 5.3 5.9 2.9" fill="none" stroke="#fff" stroke-width=".9"/></svg>
<div class="a" style="left:578px;top:301.50px;font-size:8.47px;line-height:10px;color:#3a3a3a;transform:scaleX(0.8333);transform-origin:left center;">Grün</div>
<div class="a" style="left:621px;top:301.50px;width:57.96px;overflow:hidden;font-size:8.40px;line-height:10px;color:#2a6bb3;transform:scaleX(0.8333);transform-origin:left center">PPP Project Manager</div>
<div class="a" style="left:673.7px;top:301.50px;font-size:8.16px;line-height:10px;color:#3a3a3a;transform:scaleX(0.8333);transform-origin:left center;">20.02.2025</div>
<div class="a" style="left:122.3px;top:325px;width:10px;height:10px;border:1px solid #ababab;border-radius:1.5px;background:#fff"></div>
<svg class="a" style="left:122.3px;top:325px" width="10" height="10" viewBox="0 0 10 10"><path d="M3 5.2L4.4 6.5 7.2 3.6" fill="none" stroke="#e6e6e6" stroke-width=".7"/></svg>
<div class="a" style="left:146px;top:325.50px;font-size:8.16px;line-height:10px;color:#3a3a3a;transform:scaleX(0.8333);transform-origin:left center;">2024-1016</div>
<div class="a" style="left:206.2px;top:329.8px;width:1.8px;height:1.8px;background:#3b8ad9;"></div>
<div class="a" style="left:216px;top:325.50px;font-size:8.70px;line-height:10px;color:#2a6bb3;transform:scaleX(0.8333);transform-origin:left center;">Upgrade DO 3000 to 3500</div>
<div class="a" style="right:599.8px;top:325.50px;font-size:8.28px;line-height:10px;color:#3a3a3a;transform:scaleX(0.8333);transform-origin:right center;">0%</div>
<div class="a" style="left:408.3px;top:325.50px;font-size:8.16px;line-height:10px;color:#3a3a3a;transform:scaleX(0.8333);transform-origin:left center;">06.05.2024</div>
<div class="a" style="left:460.9px;top:325.50px;font-size:8.16px;line-height:10px;color:#3a3a3a;transform:scaleX(0.8333);transform-origin:left center;">31.07.2024</div>
<div class="a" style="left:515.9px;top:325.50px;font-size:8.48px;line-height:10px;color:#3a3a3a;transform:scaleX(0.8333);transform-origin:left center;">Projekt erstellt</div>
<svg class="a" style="left:568px;top:326.8px" width="8" height="8" viewBox="0 0 8 8"><circle cx="4" cy="4" r="3.8" fill="#3f7a12"/><path d="M2.2 4.1L3.5 5.3 5.9 2.9" fill="none" stroke="#fff" stroke-width=".9"/></svg>
<div class="a" style="left:578px;top:325.50px;font-size:8.47px;line-height:10px;color:#3a3a3a;transform:scaleX(0.8333);transform-origin:left center;">Grün</div>
<div class="a" style="left:621px;top:325.50px;width:57.96px;overflow:hidden;font-size:8.40px;line-height:10px;color:#2a6bb3;transform:scaleX(0.8333);transform-origin:left center">PPP Project Manager</div>
<div class="a" style="left:673.7px;top:325.50px;font-size:8.16px;line-height:10px;color:#3a3a3a;transform:scaleX(0.8333);transform-origin:left center;">25.03.2024</div>
<svg class="a" style="left:736px;top:76px" width="9" height="9" viewBox="0 0 9 9"><rect x=".5" y=".8" width="7.6" height="7" fill="none" stroke="#4b8fd6" stroke-width=".8"/><path d="M.5 2.6H8.1M3.2 2.6V7.8M5.6 2.6V7.8" stroke="#4b8fd6" stroke-width=".7"/><circle cx="7" cy="7.2" r="1.5" fill="#fff" stroke="#4b8fd6" stroke-width=".7"/></svg>
<div class="a" style="left:749px;top:75.80px;font-size:8.58px;line-height:10px;color:#3a3a3a;transform:scaleX(0.8333);transform-origin:left center;">Spalten bearb.</div>
<svg class="a" style="left:806px;top:76px" width="10" height="9" viewBox="0 0 10 9"><path d="M.6 .8H9L5.9 4.6V8.2L3.8 7V4.6Z" fill="none" stroke="#4b8fd6" stroke-width=".8" stroke-linejoin="round"/></svg>
<div class="a" style="left:819px;top:75.80px;font-size:8.64px;line-height:10px;color:#3a3a3a;transform:scaleX(0.8333);transform-origin:left center;">Filter bearbeiten</div>
<div class="a" style="left:882px;top:71px;width:95px;height:16.6px;border:1px solid #8a8886;border-radius:1px;background:#fff"></div>
<svg class="a" style="left:888.5px;top:75px" width="10" height="10" viewBox="0 0 10 10"><circle cx="6" cy="3.8" r="2.9" fill="none" stroke="#555" stroke-width=".8"/><path d="M3.9 5.9L1 8.8" stroke="#555" stroke-width=".9"/></svg>
<div class="a" style="left:901.7px;top:75.10px;font-size:8.52px;line-height:10px;color:#616161;transform:scaleX(0.8333);transform-origin:left center;">Nach Schlüsselwort fi...</div>
<svg class="a" style="left:838px;top:105px" width="9" height="8" viewBox="0 0 9 8"><path d="M.4 .4H1.9V1.9H.4ZM.4 2.9H1.9V4.4H.4ZM.4 5.4H1.9V6.9H.4Z" fill="#4b8fd6"/><path d="M3 1.15H8.6M3 3.65H8.6M3 6.15H8.6" stroke="#4b8fd6" stroke-width="1.3"/></svg>
<div class="a" style="left:851px;top:104.50px;font-size:8.81px;line-height:10px;color:#3a3a3a;transform:scaleX(0.8333);transform-origin:left center;">Anzeigefunktionen</div>
<svg class="a" style="left:916px;top:107px" width="7" height="4" viewBox="0 0 7 4"><path d="M.5 .6L3.3 3.2 6.1 .6" fill="none" stroke="#666" stroke-width=".7"/></svg>
<div class="a" style="left:932px;top:106px;width:1px;height:7px;background:#c8c8c8;"></div>
<svg class="a" style="left:944px;top:104.5px" width="10" height="10" viewBox="0 0 10 10"><path d="M7.9 2.2A4.1 4.1 0 1 1 5 .9" fill="none" stroke="#3a8ee6" stroke-width="1"/><path d="M4 -.3L5.6 .9 4.2 2.3" fill="none" stroke="#3a8ee6" stroke-width=".9" stroke-linejoin="round"/></svg>
<svg class="a" style="left:963.8px;top:105.2px" width="9" height="9" viewBox="0 0 9 9"><path d="M7.65 3.94L8.67 4.02L8.67 4.98L7.65 5.06L7.13 6.33L7.79 7.11L7.11 7.79L6.33 7.13L5.06 7.65L4.98 8.67L4.02 8.67L3.94 7.65L2.67 7.13L1.89 7.79L1.21 7.11L1.87 6.33L1.35 5.06L0.33 4.98L0.33 4.02L1.35 3.94L1.87 2.67L1.21 1.89L1.89 1.21L2.67 1.87L3.94 1.35L4.02 0.33L4.98 0.33L5.06 1.35L6.33 1.87L7.11 1.21L7.79 1.89L7.13 2.67Z" fill="none" stroke="#3a8ee6" stroke-width=".85" stroke-linejoin="round"/><circle cx="4.5" cy="4.5" r="1.6" fill="none" stroke="#3a8ee6" stroke-width=".85"/></svg>
<svg class="a" style="left:977px;top:107px" width="7" height="4" viewBox="0 0 7 4"><path d="M.5 .6L3.3 3.2 6.1 .6" fill="none" stroke="#666" stroke-width=".7"/></svg>
<div class="a" style="left:739px;top:120px;width:3.5px;height:372px;background:#ececec;"></div>
<div class="a" style="left:744px;top:123.50px;font-size:8.06px;line-height:10px;color:#505050;font-weight:bold;transform:scaleX(0.8929);transform-origin:left center;">024</div>
<div class="a" style="left:869.6px;top:123.50px;font-size:7.84px;line-height:10px;color:#505050;font-weight:bold;transform:scaleX(0.8929);transform-origin:left center;">2025</div>
<div class="a" style="left:745px;top:138.30px;font-size:8.40px;line-height:10px;color:#4a4a4a;font-weight:bold;transform:scaleX(0.8333);transform-origin:left center;">4</div>
<div class="a" style="left:776.7px;top:138.30px;font-size:8.40px;line-height:10px;color:#474747;font-weight:bold;transform:scaleX(0.8333);transform-origin:left center;">Jan 2025</div>
<div class="a" style="left:834.2px;top:138.30px;font-size:8.40px;line-height:10px;color:#474747;font-weight:bold;transform:scaleX(0.8333);transform-origin:left center;">Feb 2025</div>
<div class="a" style="left:906.2px;top:138.30px;font-size:8.40px;line-height:10px;color:#474747;font-weight:bold;transform:scaleX(0.8333);transform-origin:left center;">2025</div>
<div class="a" style="left:949.2px;top:138.30px;font-size:8.40px;line-height:10px;color:#474747;font-weight:bold;transform:scaleX(0.8333);transform-origin:left center;">Apr 2025</div>
<div class="a" style="left:745px;top:150px;width:246px;height:1px;background:#eeeeee;"></div>
<div class="a" style="left:762px;top:151px;width:1px;height:333px;background:#c4c4c4;"></div>
<div class="a" style="left:820px;top:151px;width:1px;height:333px;background:#f2f2f2;"></div>
<div class="a" style="left:877.5px;top:151px;width:1px;height:333px;background:#f2f2f2;"></div>
<div class="a" style="left:935.5px;top:151px;width:1px;height:333px;background:#f2f2f2;"></div>
<div class="a" style="left:745px;top:174px;width:246px;height:1px;background:#efefef;"></div>
<div class="a" style="left:745px;top:198px;width:246px;height:1px;background:#efefef;"></div>
<div class="a" style="left:745px;top:222px;width:246px;height:1px;background:#efefef;"></div>
<div class="a" style="left:745px;top:246px;width:246px;height:1px;background:#efefef;"></div>
<div class="a" style="left:745px;top:270px;width:246px;height:1px;background:#efefef;"></div>
<div class="a" style="left:745px;top:294px;width:246px;height:1px;background:#efefef;"></div>
<div class="a" style="left:745px;top:318px;width:246px;height:1px;background:#efefef;"></div>
<div class="a" style="left:745px;top:342px;width:246px;height:1px;background:#efefef;"></div>
<div class="a" style="left:746.4px;top:252px;width:229px;height:12.8px;background:#a4d5a4;"></div>
<div class="a" style="left:746.4px;top:252px;width:61.5px;height:12.8px;background:#8bb68b;"></div>
<div class="a" style="left:831.4px;top:276.4px;width:56.6px;height:12.6px;background:#a4d5a4;"></div>
<div class="a" style="left:831.4px;top:276.4px;width:18.8px;height:12.6px;background:#8bb68b;"></div>
<svg class="a" style="left:859.5px;top:302px" width="9" height="10" viewBox="0 0 9 10"><rect x=".4" y="2" width="8.2" height="7.8" rx=".6" fill="#8a8a8a"/><rect x="1.6" y=".4" width="1.4" height="2.4" fill="#8a8a8a"/><rect x="6" y=".4" width="1.4" height="2.4" fill="#8a8a8a"/><path d="M.4 3.6H8.6" stroke="#fff" stroke-width=".4"/></svg>
<div class="a" style="left:881.6px;top:135.6px;width:23.5px;height:14.6px;background:#fb4d55;border-radius:1px 3px 3px 0;"></div>
<div class="a" style="left:886px;top:137.90px;font-size:6.60px;line-height:10px;color:#fff;font-weight:bold;transform:scaleX(0.8333);transform-origin:left center;">Today</div>
<div class="a" style="left:881.8px;top:150px;width:1.1px;height:334px;background:#f76167;"></div>
<div class="a" style="left:942.6px;top:487px;width:48px;height:3.6px;background:#c2c2c2;border-radius:2px;"></div>
<div class="a" style="left:118px;top:70px;width:94px;height:23px;border:2px solid #d6084f"></div>
<svg class="a" style="left:216px;top:73px" width="10" height="16" viewBox="0 0 10 16"><path d="M5.3 1H8.1V15H5.3V4.6L2.2 6.4V3.6Z" fill="#d6084f"/></svg>
<div class="a" style="left:114px;top:148px;width:28px;height:198px;border:2px solid #d6084f"></div>
<div class="a" style="left:126.5px;top:346px;width:2px;height:29px;background:#d6084f;"></div>
<div class="a" style="left:196px;top:147px;width:120px;height:201px;border:2px solid #d6084f"></div>
<div class="a" style="left:253.5px;top:348px;width:2px;height:8px;background:#d6084f;"></div>
<div class="a" style="left:224px;top:359.90px;font-size:15.11px;line-height:18px;color:#d6084f;font-weight:bold;transform:scaleX(0.9709);transform-origin:left center;">Link zum Öffnen der Datensätze</div>
<div class="a" style="left:116.3px;top:382.30px;font-size:15.11px;line-height:18px;color:#d6084f;font-weight:bold;transform:scaleX(0.9709);transform-origin:left center;">Spalte zum Markieren einzelner Datensätze</div>
<div class="a" style="left:732px;top:72px;width:70px;height:17.5px;border:2px solid #d6084f"></div>
<div class="a" style="left:733.8px;top:52.50px;font-size:19.43px;line-height:20px;color:#d6084f;font-weight:bold;transform:scaleX(0.9524);transform-origin:left center;">2</div>
<div class="a" style="left:803px;top:72px;width:70.5px;height:17.5px;border:2px solid #d6084f"></div>
<div class="a" style="left:809px;top:52.90px;font-size:19.43px;line-height:20px;color:#d6084f;font-weight:bold;transform:scaleX(0.9524);transform-origin:left center;">3</div>
<div class="a" style="left:878px;top:68px;width:104px;height:25px;border:2px solid #d6084f"></div>
<div class="a" style="left:909.6px;top:46.70px;font-size:19.74px;line-height:20px;color:#d6084f;font-weight:bold;transform:scaleX(0.9524);transform-origin:left center;">4</div>
<div class="a" style="left:832px;top:102.4px;width:94px;height:13.199999999999989px;border:2px solid #d6084f"></div>
<div class="a" style="left:813.4px;top:99.50px;font-size:19.11px;line-height:20px;color:#d6084f;font-weight:bold;transform:scaleX(0.9524);transform-origin:left center;">5</div>
<div class="a" style="left:743px;top:122px;width:250px;height:232.5px;border:2px solid #d6084f"></div>
<div class="a" style="left:826.5px;top:354px;width:2px;height:7px;background:#d6084f;"></div>
<div class="a" style="left:764.7px;top:362.60px;font-size:14.90px;line-height:18px;color:#d6084f;font-weight:bold;transform:scaleX(0.9709);transform-origin:left center;">Grafische Projektübersicht</div>
</body></html>
